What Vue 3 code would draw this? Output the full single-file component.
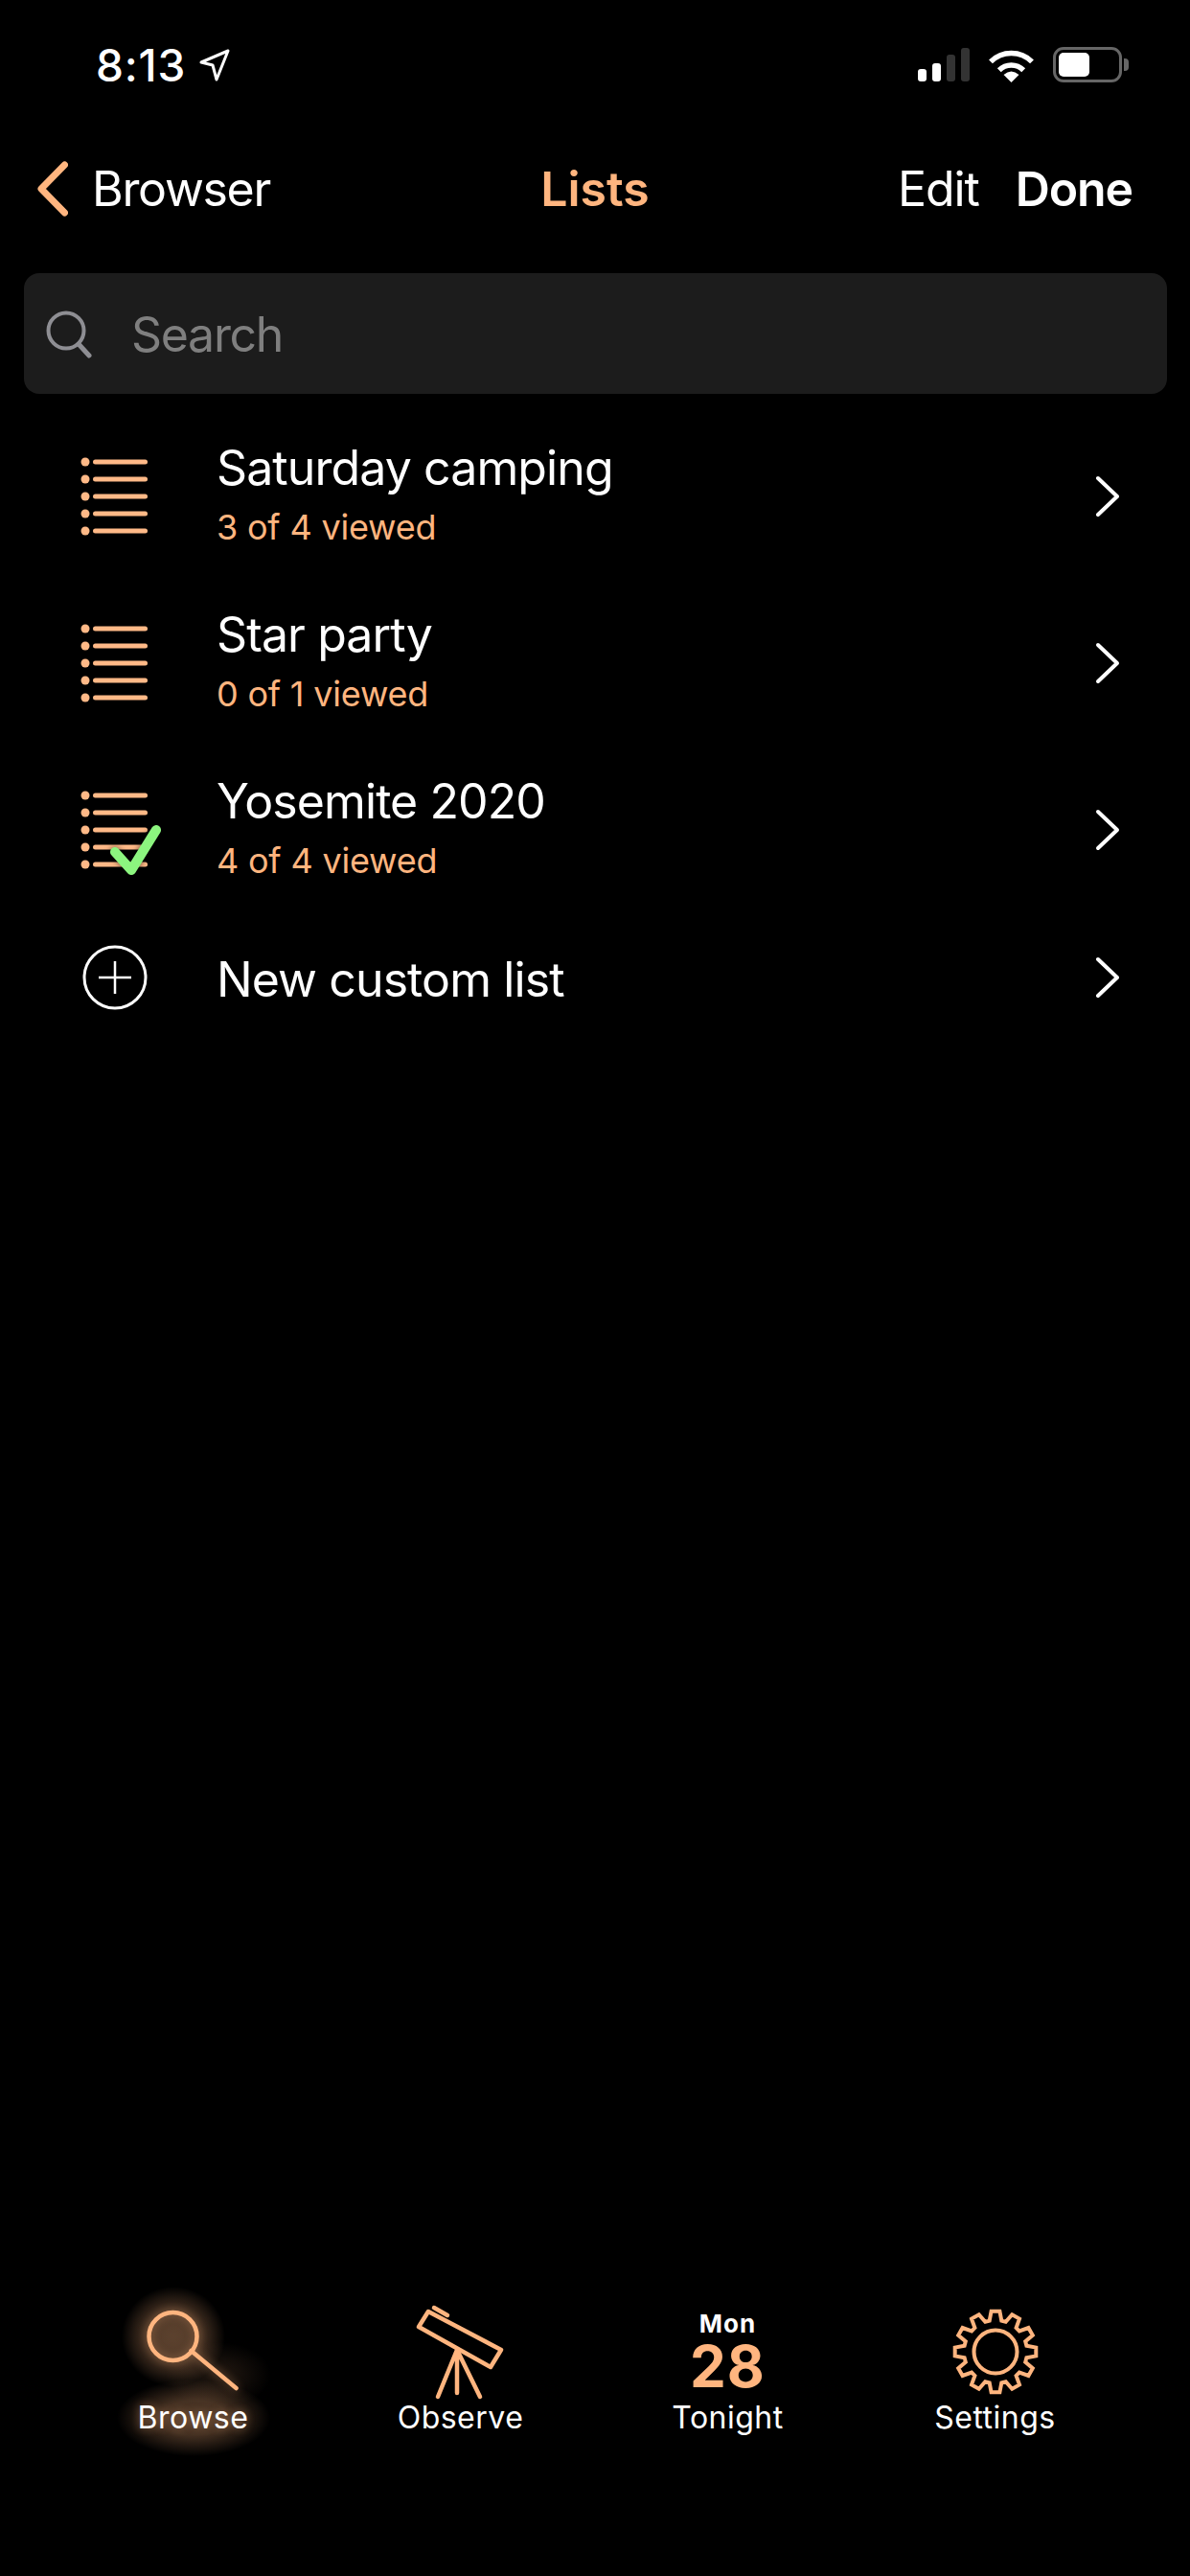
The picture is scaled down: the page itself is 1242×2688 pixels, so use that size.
<script setup>
import { computed } from 'vue';

const lists = [
  { name: 'Saturday camping', viewed: '3 of 4 viewed', done: false },
  { name: 'Star party', viewed: '0 of 1 viewed', done: false },
  { name: 'Yosemite 2020', viewed: '4 of 4 viewed', done: true }
];

const bulletRows = [0, 18, 36, 54, 72];

function polar(r, deg, cx, cy) {
  const a = (deg - 90) * Math.PI / 180;
  return `${(cx + r * Math.cos(a)).toFixed(1)} ${(cy + r * Math.sin(a)).toFixed(1)}`;
}

// 12 tooth gear outline
const gearPath = computed(() => {
  const pts = [];
  for (let i = 0; i < 12; i++) {
    const c = i * 30;
    pts.push(polar(33, c - 11, 70, 54), polar(42.5, c - 6, 70, 54), polar(42.5, c + 6, 70, 54), polar(33, c + 11, 70, 54));
  }
  return 'M' + pts.join(' L') + ' Z';
});
</script>

<template>
  <div class="screen">
    <div class="status">
      <div class="clock">
        <span>8:13</span>
        <svg class="loc" width="34" height="36" viewBox="0 0 34 36">
          <path d="M3 15 L31 3 L19 33 L15 18 Z" fill="none" stroke="#fff" stroke-width="3" stroke-linejoin="round" />
        </svg>
      </div>
      <div class="indicators">
        <div class="signal">
          <i class="bar b1"></i>
          <i class="bar b2"></i>
          <i class="bar b3 off"></i>
          <i class="bar b4 off"></i>
        </div>
        <svg width="49" height="36" viewBox="0 0 49 36">
          <path d="M3 14.4 A30.5 30.5 0 0 1 46 14.4" fill="none" stroke="#fff" stroke-width="5.5" />
          <path d="M11.8 23.3 A18 18 0 0 1 37.2 23.3" fill="none" stroke="#fff" stroke-width="5.5" />
          <path d="M24.5 36 L16.5 28 Q24.5 21 32.5 28 Z" fill="#fff" />
        </svg>
        <div class="battery">
          <div class="charge"></div>
          <div class="nub"></div>
        </div>
      </div>
    </div>

    <div class="nav">
      <div class="nav-left">
        <svg width="32" height="58" viewBox="0 0 32 58">
          <path d="M28.5 4 L4 29 L28.5 54" fill="none" stroke="#ffb57f" stroke-width="7" stroke-linecap="round" stroke-linejoin="round" />
        </svg>
        <span>Browser</span>
      </div>
      <div class="nav-title">Lists</div>
      <div class="nav-right">
        <span>Edit</span>
        <span class="done">Done</span>
      </div>
    </div>

    <div class="search">
      <svg width="48" height="50" viewBox="0 0 48 50">
        <circle cx="21" cy="21" r="18.5" fill="none" stroke="#8e8e93" stroke-width="4" />
        <path d="M34 35 L45 47" fill="none" stroke="#8e8e93" stroke-width="5" stroke-linecap="round" />
      </svg>
      <span>Search</span>
    </div>

    <div class="rows">
      <div v-for="item in lists" :key="item.name" class="row">
        <svg class="row-icon" width="100" height="100" viewBox="0 0 100 100">
          <g v-for="y in bulletRows" :key="y">
            <circle cx="19" :cy="14 + y" r="4.5" fill="#ffb987" />
            <path :d="`M29.5 ${14 + y} H81.5`" stroke="#ffb987" stroke-width="5" stroke-linecap="round" />
          </g>
          <path v-if="item.done" class="tick" d="M50 73 L67 92 L93 50" fill="none" stroke="#8cf57f" stroke-width="10" stroke-linecap="round" stroke-linejoin="round" />
        </svg>
        <div class="row-text">
          <div class="row-name">{{ item.name }}</div>
          <div class="row-sub">{{ item.viewed }}</div>
        </div>
        <svg class="chev" width="30" height="44" viewBox="0 0 30 44">
          <path d="M6 3 L26 22 L6 41" fill="none" stroke="#fff" stroke-width="4" stroke-linecap="round" stroke-linejoin="round" />
        </svg>
      </div>
      <div class="row row-new">
        <svg class="row-icon" width="100" height="100" viewBox="0 0 100 100">
          <circle cx="50" cy="50" r="32" fill="none" stroke="#fff" stroke-width="3" />
          <path d="M33 50 H67 M50 33 V67" stroke="#fff" stroke-width="2.5" />
        </svg>
        <div class="row-text">
          <div class="row-name">New custom list</div>
        </div>
        <svg class="chev" width="30" height="44" viewBox="0 0 30 44">
          <path d="M6 3 L26 22 L6 41" fill="none" stroke="#fff" stroke-width="4" stroke-linecap="round" stroke-linejoin="round" />
        </svg>
      </div>
    </div>

    <div class="tabs">
      <div class="tab active">
        <svg class="tab-icon" width="140" height="100" viewBox="0 0 140 100">
          <circle cx="48.5" cy="38" r="25" fill="none" stroke="#ffb57f" stroke-width="4.5" />
          <path d="M67.5 53 L114.5 92" stroke="#ffb57f" stroke-width="4.5" stroke-linecap="round" />
        </svg>
        <div class="tab-label">Browse</div>
      </div>
      <div class="tab">
        <svg class="tab-icon" width="140" height="100" viewBox="0 0 140 100">
          <path d="M36 12 L112 52 L101 70 L26 28 Z" fill="none" stroke="#ffb57f" stroke-width="4.5" stroke-linejoin="round" />
          <path d="M42 8 L56 16" stroke="#ffb57f" stroke-width="4.5" stroke-linecap="round" />
          <path d="M66 52 L46 101 M66 52 V97 M66 52 L90 101" fill="none" stroke="#ffb57f" stroke-width="4.5" stroke-linecap="round" />
        </svg>
        <div class="tab-label">Observe</div>
      </div>
      <div class="tab">
        <div class="date">
          <div class="date-day">Mon</div>
          <div class="date-num">28</div>
        </div>
        <div class="tab-label">Tonight</div>
      </div>
      <div class="tab">
        <svg class="tab-icon" width="140" height="100" viewBox="0 0 140 100">
          <path :d="gearPath" fill="none" stroke="#ffb57f" stroke-width="4" />
          <circle cx="70" cy="54" r="22.5" fill="none" stroke="#ffb57f" stroke-width="4" />
        </svg>
        <div class="tab-label">Settings</div>
      </div>
    </div>
  </div>
</template>

<style>
html, body {
  margin: 0;
  background: #000;
}
</style>

<style scoped>
.screen {
  width: 1242px;
  height: 2688px;
  background: #000;
  color: #fff;
  font-family: Inter, "Liberation Sans", sans-serif;
  display: flex;
  flex-direction: column;
  overflow: hidden;
}

.status {
  height: 132px;
  box-sizing: border-box;
  padding: 48px 64px 0 100px;
  display: flex;
  justify-content: space-between;
  align-items: flex-start;
}

.clock {
  display: flex;
  align-items: center;
  gap: 11px;
  font-size: 46px;
  font-weight: 500;
  line-height: 40px;
  height: 40px;
  letter-spacing: 0.8px;
}

.loc {
  margin-left: 2px;
}

.indicators {
  display: flex;
  align-items: flex-end;
  height: 38px;
  gap: 19px;
}

.signal {
  display: flex;
  align-items: flex-end;
  gap: 5.5px;
  height: 35px;
  margin-bottom: 1px;
}

.bar {
  width: 9.5px;
  border-radius: 3px;
  background: #fff;
}

.bar.off {
  background: #333;
}

.b1 { height: 13px; }
.b2 { height: 19px; }
.b3 { height: 28px; }
.b4 { height: 35px; }

.battery {
  position: relative;
  width: 72px;
  height: 37px;
  box-sizing: border-box;
  border: 3px solid #666;
  border-radius: 11px;
  margin-right: 7px;
  padding: 3px;
}

.charge {
  width: 32px;
  height: 25px;
  background: #fff;
  border-radius: 5px;
}

.nub {
  position: absolute;
  right: -10px;
  top: 9px;
  width: 5px;
  height: 13px;
  background: #666;
  border-radius: 0 4px 4px 0;
}

.nav {
  height: 130px;
  margin-bottom: 2px;
  box-sizing: border-box;
  padding: 0 39px;
  display: grid;
  grid-template-columns: 1fr auto 1fr;
  align-items: center;
  font-size: 50px;
}

.nav-left {
  display: flex;
  align-items: center;
  gap: 25px;
  letter-spacing: -1.3px;
}

.nav-title {
  color: #ffb57f;
  font-weight: 600;
}

.nav-right {
  display: flex;
  justify-content: flex-end;
  gap: 38px;
  padding-right: 21px;
  letter-spacing: -1.1px;
}

.done {
  font-weight: 600;
}

.search {
  margin: 21px 24px 0 25px;
  height: 126px;
  box-sizing: border-box;
  padding: 1px 0 0 23px;
  background: #1c1c1c;
  border-radius: 16px;
  display: flex;
  align-items: center;
  gap: 41px;
  font-size: 50px;
  letter-spacing: -1.3px;
  color: #7f7f7f;
}

.rows {
  margin-top: 20px;
  flex: 1;
}

.row {
  height: 174px;
  display: flex;
  align-items: center;
  padding: 0 72px 0 70px;
}

.row-new {
  height: 134px;
}

.row-new .row-text {
  padding-top: 4px;
}

.row-icon {
  flex: none;
  overflow: visible;
}

.tick {
  filter: drop-shadow(0 0 3px rgba(0, 0, 0, 0.6));
}

.row-text {
  flex: 1;
  margin-left: 56px;
}

.row-name {
  font-size: 50px;
  line-height: 62px;
  letter-spacing: -0.9px;
}

.row-sub {
  font-size: 36px;
  line-height: 44px;
  margin-top: 9px;
  margin-bottom: 7px;
  letter-spacing: -0.2px;
  color: #ffb57f;
}

.chev {
  flex: none;
}

.tabs {
  height: 288px;
  box-sizing: border-box;
  padding: 0 64px 0 62px;
  display: grid;
  grid-template-columns: repeat(4, 1fr);
}

.tab {
  position: relative;
  isolation: isolate;
  display: flex;
  flex-direction: column;
  align-items: center;
}

.tab-icon {
  overflow: visible;
  display: block;
}

.tab-label {
  font-size: 32px;
  line-height: 46px;
  letter-spacing: 0.5px;
  white-space: nowrap;
}

.active::before {
  content: "";
  position: absolute;
  z-index: -1;
  top: -20px;
  left: 50%;
  width: 200px;
  height: 190px;
  margin-left: -100px;
  background:
    radial-gradient(ellipse 54px 52px at 79px 58px, rgba(255, 181, 127, 0.36) 0%, rgba(255, 181, 127, 0.33) 45%, rgba(255, 181, 127, 0) 100%),
    radial-gradient(ellipse 80px 40px at 100px 143px, rgba(255, 181, 127, 0.3) 0%, rgba(255, 181, 127, 0.27) 45%, rgba(255, 181, 127, 0) 100%),
    radial-gradient(ellipse 55px 34px at 126px 98px, rgba(255, 181, 127, 0.14) 0%, rgba(255, 181, 127, 0) 100%);
}

.active .tab-icon {
  filter: drop-shadow(0 0 5px rgba(255, 181, 127, 0.35));
}

.active .tab-label {
  text-shadow: 0 0 10px rgba(255, 181, 127, 0.45);
}

.date {
  height: 100px;
  box-sizing: border-box;
  padding-top: 11px;
  display: flex;
  flex-direction: column;
  align-items: center;
  font-weight: 700;
}

.date-day {
  font-size: 26px;
  line-height: 28px;
  letter-spacing: 1px;
}

.date-num {
  margin-top: 6px;
  font-size: 60px;
  line-height: 48px;
  letter-spacing: 1px;
  color: #ffb57f;
}
</style>
